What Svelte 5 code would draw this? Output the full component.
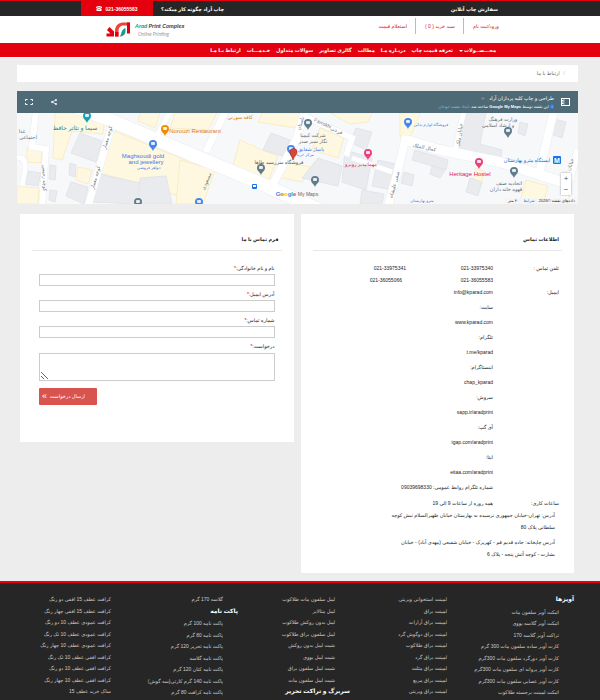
<script>
  const menu = [
    'محـــصــولات',
    'تعرفه قیمت چاپ',
    'دربـاره مـا',
    'مطالب',
    'گالری تصاویر',
    'سوالات متداول',
    'خـدمـــات',
    'ارتباط بـا مـا',
  ]

  const contacts = [
    'سایت:',
    'www.kparad.com',
    'تلگرام:',
    't.me/kparad',
    'اینستاگرام:',
    'chap_kparad',
    'سروش:',
    'sapp.ir/aradprint',
    'آی گپ:',
    'igap.com/aradprint',
    'ایتا:',
    'eitaa.com/aradprint',
    'شماره تلگرام روابط عمومی: 09039698330',
  ]

  const fields = [
    { id: 'name', label: 'نام و نام خانوادگی:' },
    { id: 'email', label: 'آدرس ایمیل:' },
    { id: 'phone', label: 'شماره تماس:' },
  ]

  const columns = [
    [
      { title: 'آویزها' },
      'اتیکت آویز سلفون مات',
      'اتیکت آویز گلاسه یووی',
      'تراکت آویز گلاسه 170',
      'کارت آویز ساده سلفون مات 300 گرم',
      'کارت آویز دورگرد سلفون مات 300گرم',
      'کارت آویز پروانه ای سلفون مات 300گرم',
      'کارت آویز عصایی سلفون مات 300گرم',
      'اتیکت لمینت برجسته طلاکوب',
    ],
    [
      'لمینت استخوانی ویزیتی',
      'لمینت براق',
      'لمینت براق آرارات',
      'لمینت براق دوگوش گرد',
      'لمینت براق طلاکوب',
      'لمینت براق گرد',
      'لمینت براق مثلث',
      'لمینت براق مربع',
      'لمینت براق ویزیتی',
    ],
    [
      'لیبل سلفون مات طلاکوب',
      'لیبل متالایز',
      'لیبل بدون روکش طلاکوب',
      'لیبل سلفون براق طلاکوب',
      'شیت لیبل بدون روکش',
      'شیت لیبل یووی',
      'شیت لیبل سلفون براق',
      'شیت لیبل سلفون مات',
      { title: 'سربرگ و تراکت تحریر' },
    ],
    [
      'گلاسه 170 گرم',
      { title: 'پاکت نامه' },
      'پاکت نامه 100 گرم',
      'پاکت نامه 80 گرم',
      'پاکت نامه تحریر 120 گرم',
      'پاکت نامه گلاسه',
      'پاکت نامه کتان 120 گرم',
      'پاکت نامه 140 گرم کارتی(سه گوش)',
      'پاکت نامه کرافت 80 گرم',
    ],
    [
      'کرافت عطف 15 افقی دو رنگ',
      'کرافت عطف 15 افقی چهار رنگ',
      'کرافت عمودی عطف 10 دو رنگ',
      'کرافت عمودی عطف 10 تک رنگ',
      'کرافت عمودی عطف 10 چهار رنگ',
      'کرافت افقی عطف 10 تک رنگ',
      'کرافت افقی عطف 10 دو رنگ',
      'کرافت افقی عطف 10 چهار رنگ',
      'ساک خرید عطف 15',
    ],
  ]

  // map drawing, in map units
  const shops = [
    '55,113 80,113 104,124 103,134 72,131 62,160 53,158',
    '112,130 180,158 195,165 186,198 100,173',
    '180,160 215,170 203,204 176,204',
    '27,148 42,150 41,163 27,162',
    '78,167 92,170 88,184 76,180',
    '17,186 39,188 38,204 17,204',
    '140,113 160,113 155,128 138,121',
    '175,113 217,113 208,130 170,128',
    '240,140 262,150 278,156 268,182 233,166',
    '262,113 300,113 296,128 258,122',
    '330,113 372,113 368,122 350,124',
    '320,128 344,138 338,158 312,150',
    '283,160 312,168 302,182 274,176',
    '400,113 420,113 410,138 400,136',
    '476,168 484,171 481,184 473,180',
    '526,180 548,186 543,204 521,198',
  ]
  const blocks = [
    '80,133 102,141 96,162 71,153',
    '28,171 41,173 38,186 25,184',
    '50,165 56,166 55,180 49,179',
    '71,182 88,187 84,204 66,196',
    '50,190 57,191 55,202 49,200',
    '70,163 76,165 75,177 69,175',
    '100,174 140,183 135,204 93,202',
    '140,178 166,176 172,204 138,204',
    '271,133 290,140 283,156 263,150',
    '318,158 342,166 338,186 302,178',
    '345,150 372,158 366,190 342,182',
    '356,128 372,132 366,150 350,142',
    '378,160 396,164 392,190 372,186',
    '362,190 384,194 382,204 360,204',
    '466,113 486,113 480,144 502,150 500,162 458,150',
    '415,150 448,160 446,170 412,160',
    '520,122 528,124 525,136 518,133',
    '506,158 522,162 520,172 502,168',
    '470,178 482,182 478,196 466,192',
    '432,166 445,170 440,178 430,174',
    '404,172 414,175 412,186 401,183',
    '550,118 566,122 562,138 546,132',
  ]
  const roads = [
    { d: 'M68 104 L105 118 L200 158 L262 184 L320 210', w: 13 },
    { d: 'M111 128 L98 172 L88 206', w: 7 },
    { d: 'M36 110 L32 147 L46 149 L42 206', w: 6 },
    { d: 'M17 158 Q26 156 25 170 L22 186', w: 5 },
    { d: 'M226 110 L206 152', w: 7 },
    { d: 'M170 112 L158 134', w: 5 },
    { d: 'M306 108 L296 140 L272 186', w: 8 },
    { d: 'M300 114 L352 138 L346 156', w: 6 },
    { d: 'M352 158 L392 172', w: 5 },
    { d: 'M406 140 L440 150 L500 162 L568 184', w: 10 },
    { d: 'M406 136 L398 170 L388 206', w: 8 },
    { d: 'M464 110 L455 152', w: 5 },
    { d: 'M554 110 L539 174', w: 8 },
    { d: 'M578 150 L562 206', w: 7 },
  ]
  const pins = [
    { x: 87, y: 123, color: '#12a4b8' },
    { x: 165, y: 136, color: '#f08c00' },
    { x: 153, y: 151, color: '#4285f4' },
    { x: 138, y: 209, color: '#607d8b' },
    { x: 199, y: 209, color: '#4285f4' },
    { x: 308, y: 130, color: '#607d8b' },
    { x: 291, y: 156, color: '#4285f4' },
    { x: 261, y: 175, color: '#607d8b' },
    { x: 315, y: 187, color: '#607d8b' },
    { x: 368, y: 160, color: '#ec407a' },
    { x: 408, y: 129, color: '#4285f4' },
    { x: 508, y: 138, color: '#607d8b' },
    { x: 479, y: 169, color: '#ec407a' },
    { x: 514, y: 178, color: '#607d8b' },
  ]
  const places = [
    { x: 75, y: 130, t: 'سیما و تئاتر حافظ', c: '#128a92' },
    { x: 195, y: 133, t: 'Norouzi Restaurant', c: '#e07a10' },
    { x: 143, y: 158, t: 'Maghsoudi gold', c: '#3b78e7' },
    { x: 146, y: 164, t: 'and jewellery', c: '#3b78e7' },
    { x: 149, y: 169, t: 'جواهر فروشی', c: '#3b78e7', s: 4 },
    { x: 240, y: 119, t: 'کافه سورنی', c: '#e07a10', s: 5 },
    { x: 313, y: 137, t: 'شرکت کیمیا', c: '#5f6d76', s: 5 },
    { x: 313, y: 143, t: 'نگار سبز صدر', c: '#5f6d76', s: 5 },
    { x: 311, y: 151, t: 'پاساژ شقایق', c: '#3b78e7', s: 5 },
    { x: 305, y: 156, t: 'مرکز خرید', c: '#3b78e7', s: 4 },
    { x: 279, y: 164, t: 'فروشگاه سررسید طاها', c: '#4c5a63', s: 5 },
    { x: 361, y: 166, t: 'مهمانپذیر روبرو', c: '#d81b60', s: 5 },
    { x: 431, y: 126, t: 'فروشگاه لوازم یدکی', c: '#3b78e7', s: 4 },
    { x: 503, y: 121, t: 'وزارت فرهنگ', c: '#5f6d76', s: 5 },
    { x: 498, y: 127, t: 'و ارشاد اسلامی', c: '#5f6d76', s: 5 },
    { x: 527, y: 162, t: 'ایستگاه مترو بهارستان', c: '#1a5fd0', s: 5 },
    { x: 470, y: 176, t: 'Heritage Hostel', c: '#d81b60' },
    { x: 509, y: 185, t: 'اتحادیه صنف', c: '#5f6d76', s: 5 },
    { x: 506, y: 191, t: 'قهوه خانه داران', c: '#5f6d76', s: 5 },
    { x: 28, y: 139, t: 'اجتماعی', c: '#5f6d76', s: 5 },
    { x: 22, y: 133, t: 'غذا', c: '#5f6d76', s: 5 },
    { x: 422, y: 202, t: 'مترو بهارستان', c: '#3b78e7', s: 4 },
  ]
  const streets = [
    { x: 109, y: 138, r: -74, t: 'کوچه معمار' },
    { x: 97, y: 178, r: -74, t: 'کوچه معمار' },
    { x: 43, y: 178, r: 88, t: 'کوچه رحیمی' },
    { x: 302, y: 124, r: -72, t: 'باستان' },
    { x: 322, y: 125, r: 24, t: 'Farrokhi' },
    { x: 336, y: 132, r: 24, t: 'فرخی' },
    { x: 424, y: 149, r: 12, t: 'کمال الملک' },
    { x: 461, y: 135, r: -82, t: 'خیابان ملک' },
    { x: 396, y: 185, r: -74, t: 'صفی علیشاه' },
    { x: 208, y: 182, r: -68, t: 'مسعودی' },
    { x: 572, y: 165, r: -72, t: 'خیابان' },
  ]
</script>

<div class="page" dir="rtl" lang="fa">
  <div class="topbar">
    <a class="order" href="#order">سفارش چاپ آنلاین</a>
    <a class="how" href="#how">چاپ آراد چگونه کار میکند؟</a>
    <a class="tel" href="tel:02136055583">
      <span dir="ltr">021-36055583</span>
      <svg width="6" height="5" viewBox="0 0 12 10" fill="#fff">
        <path d="M0 3.600Q0 0 6 0T12 3.600V4.500H9V2.600Q6 1.900 3 2.600V4.500H0Z" />
        <path d="M4 3.500H8L11 7V10H1V7Z" />
        <circle cx="6" cy="6.800" r="1.400" fill="#e4000f" />
      </svg>
    </a>
  </div>

  <header>
    <nav class="account">
      <a href="#login">ورود/ثبت نام</a>
      <a href="#cart">سبد خرید ( 0 )</a>
      <a href="#price">استعلام قیمت</a>
    </nav>
    <a class="logo" href="#home" dir="ltr">
      <svg width="25" height="16" viewBox="0 0 48 32">
        <path d="M0 25H8L1 18L6 12L15 21V31H0Z" fill="#e4000f" />
        <path d="M17 31V21C17 10 23 3 33 3H47V9H34C27 9 24 14 24 21V31Z" fill="#ec4634" />
        <path d="M26 31C31 28 28 17 38 14V20C38 26 34 31 26 31Z" fill="#12a08c" />
        <path d="M41 3H47V25H41Z" fill="#e4000f" />
        <path d="M17 22H24V31H17Z" fill="#e4000f" />
      </svg>
      <span class="brand">
        <b><i>Arad</i> Print Complex</b>
        <small>Online Printing</small>
      </span>
    </a>
  </header>

  <nav class="menu">
    {#each menu as item, i}
      <a href="#menu">{item}{#if i === 0}<span class="caret"></span>{/if}</a>
    {/each}
  </nav>

  <main>
    <div class="crumb"><span>/</span><a href="#contact">ارتباط با ما</a></div>

    <section class="map" dir="ltr">
      <div class="map-bar">
        <button aria-label="Fullscreen">
          <svg width="8" height="6" viewBox="0 0 16 12" fill="none" stroke="#fff" stroke-width="2">
            <path d="M1 4V1H5M11 1H15V4M15 8V11H11M5 11H1V8" />
          </svg>
        </button>
        <button aria-label="Share">
          <svg width="6" height="6" viewBox="0 0 12 12" fill="#fff" stroke="#fff">
            <path d="M10 2L2 6L10 10" fill="none" stroke-width="1.500" />
            <circle cx="10" cy="2" r="1.500" /><circle cx="2" cy="6" r="1.500" /><circle cx="10" cy="10" r="1.500" />
          </svg>
        </button>
        <div class="map-title" dir="rtl">
          <strong>طراحی و چاپ کلیه پردازان آراد <span class="star">☆</span></strong>
          <span class="by">
            <span class="dot">i</span> این نقشه توسط <b>Google My Maps</b> ساخته شد. <a href="#mymaps">ایجاد نقشه خودتان.</a>
          </span>
        </div>
        <button aria-label="Legend">
          <svg width="9" height="8" viewBox="0 0 18 16" fill="none" stroke="#fff" stroke-width="2">
            <rect x="1" y="1" width="16" height="14" />
            <path d="M1 5H5M1 8H5M1 11H5" /><path d="M6 1V15" stroke-width="1" />
          </svg>
        </button>
      </div>
      <svg class="canvas" viewBox="17 113 561 91" preserveAspectRatio="xMidYMid slice">
        <rect x="17" y="113" width="561" height="91" fill="#f7f8fa" />
        {#each shops as points}
          <polygon {points} fill="#fff8e1" stroke="#f9edc6" />
        {/each}
        {#each blocks as points}
          <polygon {points} fill="#e9ebee" stroke="#e2e5e9" />
        {/each}
        {#each roads as road}
          <path d={road.d} fill="none" stroke="#e9ecf0" stroke-width={road.w + 1} />
        {/each}
        {#each roads as road}
          <path d={road.d} fill="none" stroke="#fff" stroke-width={road.w} />
        {/each}
        {#each streets as s}
          <text class="street" transform="translate({s.x} {s.y}) rotate({s.r})">{s.t}</text>
        {/each}
        {#each pins as pin}
          <g transform="translate({pin.x} {pin.y})">
            <path d="M0 0C-1 -3 -4 -4 -4 -7A4 4 0 0 1 4 -7C4 -4 1 -3 0 0Z" fill={pin.color} />
            <rect x="-2" y="-9" width="4" height="3" rx="1" fill="#fff" opacity="0.85" />
          </g>
        {/each}
        {#each places as p}
          <text x={p.x} y={p.y} fill={p.c} font-size={p.s ?? 6}>{p.t}</text>
        {/each}
        <path d="M293 160C292 156 290 155 290 152A3.500 3.500 0 0 1 297 152C297 155 294 156 293 160Z" fill="#db4437" stroke="#8e2a20" stroke-width="0.600" />
        <rect x="252" y="184" width="5" height="5" rx="1" fill="#1a73e8" />
        <rect x="253" y="185" width="3" height="2" fill="#fff" />
        <rect x="553" y="156" width="8" height="8" rx="1" fill="#1a73e8" />
        <text x="557" y="163" fill="#fff" font-size="7" font-weight="700">M</text>
        <text class="google" x="286" y="196"><tspan fill="#4285f4">G</tspan><tspan fill="#ea4335">o</tspan><tspan fill="#fbbc05">o</tspan><tspan fill="#4285f4">g</tspan><tspan fill="#34a853">l</tspan><tspan fill="#ea4335">e</tspan></text>
        <text x="308" y="196" fill="#5f6368" font-size="5">My Maps</text>
      </svg>
      <div class="zoom">
        <button aria-label="Zoom in">+</button>
        <button aria-label="Zoom out">−</button>
      </div>
      <div class="terms" dir="rtl">داده‌های نقشه ©2026 <a href="#terms">شرایط</a> ۲۰ متر</div>
    </section>

    <div class="cards">
      <section class="card info">
        <h2>اطلاعات تماس</h2>
        <dl>
          <div>
            <dt>تلفن تماس :</dt>
            <dd class="phones" dir="ltr">
              <span>021-33975341</span><span>021-33975340</span>
              <span class="in">021-36055066</span><span>021-36055583</span>
            </dd>
          </div>
          <div class="email">
            <dt>ایمیل:</dt>
            <dd><a href="mailto:info@kparad.com">info@kparad.com</a></dd>
          </div>
          {#each contacts as line}
            <div class="line"><dt></dt><dd>{line}</dd></div>
          {/each}
          <div class="hours">
            <dt>ساعات کاری:</dt>
            <dd>همه روزه از ساعات 9 الی 19</dd>
          </div>
        </dl>
        <address>
          <p>آدرس: تهران-خیابان جمهوری نرسیده به بهارستان خیابان ظهیرالسلام نبش کوچه<br />سلطانی پلاک 80</p>
          <p>آدرس چاپخانه: جاده قدیم قم - کهریزک - خیابان شفیعی (مهدی آباد) - خیابان<br />بشارت - کوچه آتش پنجه - پلاک 6</p>
        </address>
      </section>

      <section class="card">
        <h2>فرم تماس با ما</h2>
        <form onsubmit={(e) => e.preventDefault()}>
          {#each fields as field}
            <label for={field.id}>{field.label}<em>*</em></label>
            <input id={field.id} type="text" />
          {/each}
          <label for="request">درخواست:<em>*</em></label>
          <textarea id="request"></textarea>
          <button type="submit"><span>ارسال درخواست</span><b>»</b></button>
        </form>
      </section>
    </div>
  </main>

  <footer>
    {#each columns as column}
      <ul>
        {#each column as entry}
          {#if entry.title}
            <li class="title">{entry.title}</li>
          {:else}
            <li><a href="#product">{entry}</a></li>
          {/if}
        {/each}
      </ul>
    {/each}
  </footer>
</div>

<style>
  :global(body) {
    margin: 0;
    background: #ededed;
  }

  .page {
    display: flex;
    flex-direction: column;
    min-height: 100vh;
    font-family: 'Liberation Sans', 'DejaVu Sans', sans-serif;
    font-size: 5px;
    line-height: 11px;
    color: #222;
  }

  a {
    color: inherit;
    text-decoration: none;
    white-space: nowrap;
  }

  button {
    border: 0;
    padding: 0;
    background: none;
    font: inherit;
    color: inherit;
    cursor: pointer;
  }

  .topbar {
    display: flex;
    align-items: stretch;
    height: 15px;
    padding: 0 102px 0 81px;
    border-top: 1px solid #e4000f;
    background: #262626;
    color: #fff;
    font-weight: 700;
    line-height: 16px;
  }

  .how {
    margin-right: auto;
    margin-left: 8px;
  }

  .tel {
    display: flex;
    align-items: center;
    justify-content: center;
    gap: 3px;
    width: 72px;
    background: #e4000f;
  }

  header {
    display: flex;
    justify-content: space-between;
    height: 27px;
    padding: 0 101px 0 106px;
    background: #fff;
  }

  .account {
    display: flex;
    margin-top: 2px;
    height: 16px;
    line-height: 17px;
    color: #d0182b;
  }

  .account a + a {
    margin-right: 9px;
    padding-right: 8px;
    border-right: 1px solid #bbb;
  }

  .logo {
    display: flex;
    gap: 4px;
    padding-top: 5px;
  }

  .brand {
    display: flex;
    flex-direction: column;
    font-family: Lato, sans-serif;
    font-style: italic;
    line-height: 9px;
  }

  .brand b {
    font-size: 6px;
    color: #444;
  }

  .brand i {
    color: #12a08c;
  }

  .brand small {
    padding-left: 3px;
    font-size: 5px;
    color: #999;
  }

  .menu {
    display: flex;
    gap: 6px;
    height: 14px;
    padding: 0 104px;
    border-bottom: 1px solid #fff;
    background: #e4000f;
    color: #fff;
    font-weight: 700;
    line-height: 14px;
  }

  .caret {
    display: inline-block;
    margin-right: 1px;
    border: 2px solid transparent;
    border-top-color: #fff;
    border-bottom: 0;
    vertical-align: middle;
  }

  main {
    padding: 7px 22px 8px 17px;
  }

  .crumb {
    display: flex;
    gap: 4px;
    height: 17px;
    padding: 0 13px;
    background: #fff;
    line-height: 17px;
    color: #666;
  }

  .crumb span {
    color: #bbb;
  }

  .map {
    position: relative;
    margin: 9px 0 10px;
  }

  .map-bar {
    display: flex;
    align-items: center;
    gap: 18px;
    height: 22px;
    padding: 0 8px;
    background: #4d6a76;
    color: #fff;
    line-height: 8px;
  }

  .map-bar button {
    display: flex;
  }

  .map-title {
    display: flex;
    flex-direction: column;
    flex: 1;
    margin-right: -11px;
  }

  .map-title strong {
    font-weight: 400;
  }

  .star {
    padding-right: 3px;
    font-size: 4px;
  }

  .by {
    font-size: 4px;
    line-height: 7px;
  }

  .by b {
    font-size: 4px;
  }

  .by a {
    color: #7fc4f0;
  }

  .dot {
    display: inline-block;
    width: 4px;
    height: 5px;
    border-radius: 2px;
    background: #2a7de1;
    line-height: 5px;
    text-align: center;
  }

  .canvas {
    display: block;
    width: 100%;
  }

  .canvas text {
    text-anchor: middle;
  }

  .canvas .street {
    font-size: 5px;
    fill: #70757a;
  }

  .canvas .google {
    font-size: 6px;
    font-weight: 700;
  }

  .zoom {
    position: absolute;
    right: 7px;
    bottom: 9px;
    display: flex;
    flex-direction: column;
    width: 10px;
    background: #fff;
    box-shadow: 0 0 2px #999;
    color: #555;
    font-size: 8px;
    text-align: center;
  }

  .terms {
    position: absolute;
    right: 0;
    bottom: 0;
    padding: 0 3px;
    background: #f5f5f5;
    font-size: 4px;
    line-height: 6px;
  }

  .terms a {
    padding: 0 3px;
    color: #1a73e8;
  }

  .cards {
    display: grid;
    grid-template-columns: 1fr 1fr;
    align-items: start;
    gap: 7px;
    padding: 0 4px 0 3px;
  }

  .card {
    min-height: 210px;
    padding: 18px 12px 0;
    background: #fff;
  }

  .info {
    padding-bottom: 10px;
  }

  h2 {
    margin: 0;
    padding: 0 3px 3px;
    border-bottom: 1px solid #e8e8e8;
    font-size: 5px;
    line-height: 15px;
  }

  dl {
    margin: 11px 3px 0;
  }

  dl div {
    display: flex;
    line-height: 12px;
  }

  dl .email {
    margin-bottom: 2px;
  }

  dl .line {
    line-height: 15px;
  }

  dl .hours {
    padding-top: 2px;
  }

  dt {
    width: 66px;
    flex: none;
  }

  dd {
    flex: 1;
    margin: 0;
  }

  .phones {
    display: grid;
    grid-template-columns: auto 87px;
    text-align: right;
  }

  .phones .in {
    padding-right: 4px;
  }

  address {
    margin: 0 7px 0 0;
    font-style: normal;
    line-height: 12px;
  }

  address p {
    margin: 0 0 3px;
  }

  form {
    display: flex;
    flex-direction: column;
    padding: 12px 7px 0;
  }

  label {
    line-height: 11px;
  }

  em {
    color: #e4000f;
  }

  input,
  textarea {
    box-sizing: border-box;
    width: 100%;
    height: 12px;
    margin: 0 0 3px;
    padding: 0 3px;
    border: 1px solid #ccc;
    background: #fff;
    font: inherit;
  }

  textarea {
    height: 28px;
    margin: 1px 0 7px;
  }

  form button {
    display: flex;
    align-items: center;
    align-self: flex-end;
    justify-content: space-between;
    width: 58px;
    height: 17px;
    padding: 0 12px 0 3px;
    border-radius: 1px;
    background: #d9534f;
    color: #fff;
    white-space: nowrap;
  }

  form button b {
    font-size: 9px;
    font-weight: 400;
  }

  footer {
    display: grid;
    grid-template-columns: repeat(5, minmax(0, 1fr));
    flex: 1;
    padding: 11px 26px 0 14px;
    border-top: 2px solid #e4000f;
    background: #262626;
    color: #ccc;
  }

  ul {
    margin: 0;
    padding: 0;
    list-style: none;
  }

  li {
    padding-right: 15px;
    line-height: 11px;
    white-space: nowrap;
  }

  li:nth-child(even) {
    line-height: 12px;
  }

  li.title {
    padding: 0 0 1px;
    font-size: 6px;
    font-weight: 700;
    color: #fff;
  }
</style>
